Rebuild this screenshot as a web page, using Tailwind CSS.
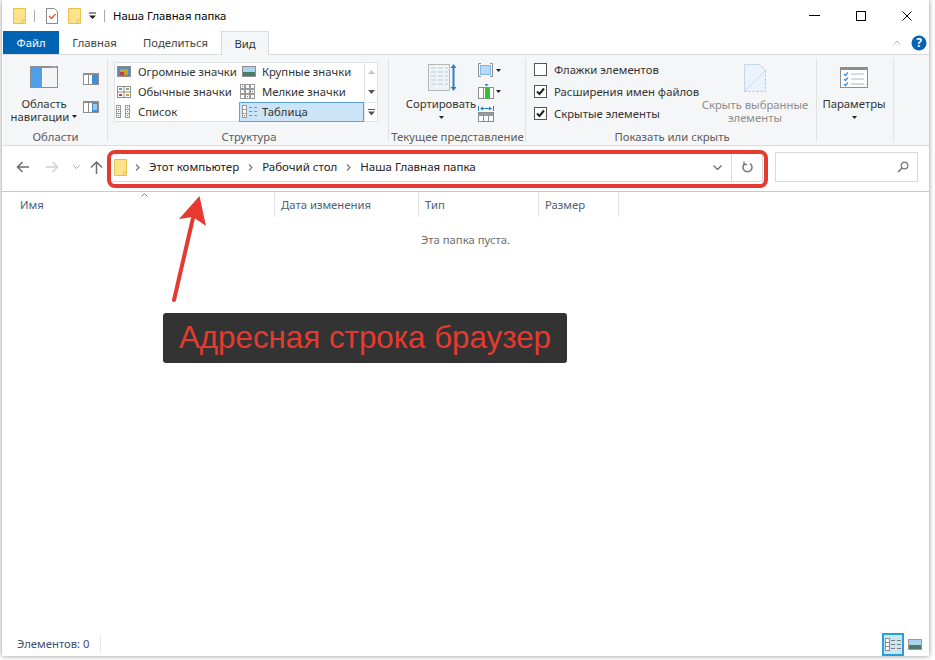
<!DOCTYPE html>
<html lang="ru">
<head>
  <meta charset="UTF-8">
  <title>Наша Главная папка</title>
  <script src="https://cdn.jsdelivr.net/npm/@tailwindcss/browser@4"></script>
</head>
<body class="bg-white">
<div class="relative w-[935px] h-[660px] overflow-hidden bg-white font-['Noto_Sans',sans-serif] text-[11.3px] leading-[13px] whitespace-nowrap">

  <!-- window -->
  <div class="ml-[2px] w-[927px] h-[656px] bg-white flex flex-col shadow-[0_0_5px_rgba(0,0,0,0.45)]">

    <!-- title bar -->
    <div class="h-[31px] flex items-start">
      <div class="flex items-center h-[31px] pl-[11px]">
        <svg width="13" height="16" viewBox="0 0 13 16"><path d="M.5.5h12v15H.5z" fill="#fde28c" stroke="#e6c24c"/><path d="M9.5 15v-3h3" fill="none" stroke="#e6c24c"/></svg>
        <div class="ml-[8px] w-px h-[12px] bg-[#a8a8a8]"></div>
        <svg class="ml-[11px]" width="12" height="16" viewBox="0 0 12 16"><path d="M.5.5h8l3 3v12H.5z" fill="#fff" stroke="#8c8c8c"/><path d="M3 8l2.5 2.5L9.5 6" fill="none" stroke="#e2582b" stroke-width="1.4"/></svg>
        <svg class="ml-[10px]" width="13" height="16" viewBox="0 0 13 16"><path d="M.5.5h12v15H.5z" fill="#fde28c" stroke="#e6c24c"/><path d="M9.5 15v-3h3" fill="none" stroke="#e6c24c"/></svg>
        <svg class="ml-[7px]" width="9" height="8" viewBox="0 0 9 8"><path d="M1 1h7" stroke="#222" stroke-width="1"/><path d="M1 3.5h7L4.5 7z" fill="#222"/></svg>
        <div class="ml-[7px] w-px h-[12px] bg-[#a8a8a8]"></div>
        <span class="ml-[8px] text-black">Наша Главная папка</span>
      </div>
      <div class="ml-auto flex items-center h-[31px] pr-[17px] gap-[36px]">
        <div class="w-[11px] h-px bg-black"></div>
        <div class="w-[10px] h-[10px] border border-black"></div>
        <svg width="10" height="10" viewBox="0 0 10 10"><path d="M.5.5l9 9M9.5.5l-9 9" stroke="#000" stroke-width="1"/></svg>
      </div>
    </div>

    <!-- tabs -->
    <div class="h-[23px] flex items-stretch text-[#444]">
      <div class="ml-px w-[56px] bg-[#0063b1] text-white flex items-center justify-center">Файл</div>
      <div class="w-[71px] flex items-center justify-center">Главная</div>
      <div class="w-[91px] flex items-center justify-center">Поделиться</div>
      <div class="w-[48px] h-[24px] bg-[#f5f6f7] border border-b-0 border-[#dadbdc] flex items-center justify-center relative z-10 text-[#333]">Вид</div>
      <div class="ml-auto flex items-center pr-[2px] gap-[10px]">
        <svg width="8" height="5" viewBox="0 0 8 5"><path d="M.5 4.5L4 1l3.5 3.5" fill="none" stroke="#b9b9b9"/></svg>
        <svg width="16" height="16" viewBox="0 0 16 16"><circle cx="8" cy="8" r="7.5" fill="#0a62b5"/><text x="8" y="12" font-size="12" font-weight="700" fill="#fff" text-anchor="middle" font-family="Noto Sans">?</text></svg>
      </div>
    </div>

    <!-- ribbon -->
    <div class="h-[92px] bg-[#f5f6f7] border-y border-[#dadbdc] flex ml-px text-[#333]">

      <!-- Области -->
      <div class="w-[105px] h-[90px] flex flex-col relative after:absolute after:right-0 after:top-[3px] after:w-px after:h-[84px] after:bg-[#e1e2e3]">
        <div class="h-[74px] flex pl-[6px]">
          <div class="w-[70px] flex flex-col items-center pt-[11px]">
            <svg width="28" height="22" viewBox="0 0 28 22"><rect width="28" height="22" fill="#8d8d8d"/><path d="M21 1h1M23 1h1M25 1h1" stroke="#d8d8d8"/><rect x="1" y="2" width="26" height="19" fill="#fff"/><rect x="1" y="2" width="11" height="19" fill="#4f9fe8"/><rect x="13" y="2" width="14" height="19" fill="#f3f4f5"/></svg>
            <div class="mt-[9px]">Область</div>
            <div class="flex items-center gap-[3px]">навигации <svg width="5" height="3" viewBox="0 0 5 3"><path d="M0 0h5L2.500 3z" fill="#222"/></svg></div>
          </div>
          <div class="ml-[4px] flex flex-col pt-[18px] gap-[16px]">
            <svg width="16" height="12" viewBox="0 0 16 12"><rect width="16" height="12" fill="#8d8d8d"/><rect x="1" y="2" width="14" height="9" fill="#fff"/><rect x="9" y="2" width="6" height="9" fill="#3d8fdc"/><rect x="5" y="2" width="1" height="9" fill="#8d8d8d"/></svg>
            <svg width="16" height="12" viewBox="0 0 16 12"><rect width="16" height="12" fill="#8d8d8d"/><rect x="1" y="2" width="14" height="9" fill="#fff"/><rect x="9" y="2" width="6" height="9" fill="#3d8fdc"/><path d="M10 4h4M10 6h4M10 8h4" stroke="#fff"/><rect x="5" y="2" width="1" height="9" fill="#8d8d8d"/></svg>
          </div>
        </div>
        <div class="text-center text-[#5c5c5c] leading-[16px]">Области</div>
      </div>

      <!-- Структура -->
      <div class="ml-px w-[280px] h-[90px] flex flex-col relative after:absolute after:right-0 after:top-[3px] after:w-px after:h-[84px] after:bg-[#e1e2e3]">
        <div class="h-[74px] pl-[5px] pt-[7px]">
          <div class="w-[264px] h-[60px] flex bg-white shadow-[inset_0_0_0_1px_#dfe1e3]">
            <div class="grid grid-cols-[125px_125px] grid-rows-[20px_20px_20px] text-[#333]">
              <div class="flex items-center pl-[3px] pb-px"><div class="w-[21px]">
                <svg width="14" height="11" viewBox="0 0 14 11"><rect width="14" height="11" fill="#8d8d8d"/><rect x="1" y="1" width="12" height="9" fill="#4e8fcf"/><rect x="3" y="3" width="8" height="6" fill="#c9a22f"/><rect x="3" y="6" width="4" height="3" fill="#c8402f"/></svg>
              </div>Огромные значки</div>
              <div class="flex items-center pl-[3px] pb-px"><div class="w-[20px]">
                <svg width="14" height="11" viewBox="0 0 14 11"><rect width="14" height="11" fill="#8d8d8d"/><rect x="1" y="1" width="12" height="9" fill="#a9d3ee"/><rect x="1" y="6" width="12" height="4" fill="#4c7a6a"/></svg>
              </div>Крупные значки</div>
              <div class="flex items-center pl-[3px] pb-px"><div class="w-[21px]">
                <svg width="14" height="12" viewBox="0 0 14 12"><rect x=".5" y=".5" width="13" height="11" fill="#fff" stroke="#8d8d8d"/><path d="M.5 6h13M7 .5v11" stroke="#8d8d8d"/><rect x="2" y="2" width="3" height="2" fill="#5a9fd8"/><rect x="9" y="2" width="3" height="2" fill="#7fb36a"/><rect x="2" y="8" width="3" height="2" fill="#c8402f"/><rect x="9" y="8" width="3" height="2" fill="#d2a52f"/></svg>
              </div>Обычные значки</div>
              <div class="flex items-center pl-[1px] pb-px"><div class="w-[22px]">
                <svg class="block" width="16" height="15" viewBox="0 0 16 15"><g fill="#fff" stroke="#9a9a9a"><rect x=".5" y=".5" width="4" height="4"/><rect x="5.500" y=".5" width="4" height="4"/><rect x="10.500" y=".5" width="4" height="4"/><rect x=".5" y="5.500" width="4" height="4"/><rect x="5.500" y="5.500" width="4" height="4"/><rect x="10.500" y="5.500" width="4" height="4"/><rect x=".5" y="10.500" width="4" height="4"/><rect x="5.500" y="10.500" width="4" height="4"/><rect x="10.500" y="10.500" width="4" height="4"/></g><rect x="2" y="2" width="1" height="1" fill="#3d8fdc"/><rect x="12" y="7" width="1" height="1" fill="#c8402f"/><rect x="7" y="12" width="1" height="1" fill="#4c9a4c"/></svg>
              </div>Мелкие значки</div>
              <div class="flex items-center pl-[2px] pb-px"><div class="w-[22px]">
                <svg class="block" width="15" height="13" viewBox="0 0 15 13"><g fill="#fff" stroke="#9a9a9a"><rect x=".5" y=".5" width="4" height="12"/><rect x="9.500" y=".5" width="4" height="12"/></g><path d="M.5 4.500h4M.5 8.500h4M9.500 4.500h4M9.500 8.500h4" stroke="#9a9a9a"/><path d="M2 2h1v1H2zM2 6h1v1H2zM11 2h1v1h-1zM11 6h1v1h-1z" fill="#777"/><path d="M2 10h1v1H2zM11 10h1v1h-1z" fill="#c8402f"/></svg>
              </div>Список</div>
              <div class="flex items-center pl-[2px] pb-px bg-[#cce4f7] border border-[#5aa3e0]"><div class="w-[20px]">
                <svg class="block" width="16" height="13" viewBox="0 0 16 13"><rect x=".5" y=".5" width="4" height="12" fill="#fff" stroke="#9a9a9a"/><path d="M.5 4.500h4M.5 8.500h4" stroke="#9a9a9a"/><path d="M7 2.500h3M12 2.500h3M7 6.500h3M12 6.500h3M7 10.500h3M12 10.500h3" stroke="#8d8d8d"/><rect x="2" y="10" width="1" height="1" fill="#c8402f"/></svg>
              </div>Таблица</div>
            </div>
            <div class="w-[14px] border-l border-[#e4e5e6] flex flex-col">
              <div class="h-[20px] flex items-center justify-center"><svg width="7" height="4" viewBox="0 0 7 4"><path d="M0 4h7L3.500 0z" fill="#c4c4c4"/></svg></div>
              <div class="h-[20px] flex items-center justify-center"><svg width="7" height="4" viewBox="0 0 7 4"><path d="M0 0h7L3.500 4z" fill="#555"/></svg></div>
              <div class="h-[20px] flex items-center justify-center border-t border-[#e4e5e6]"><svg width="7" height="7" viewBox="0 0 7 7"><path d="M0 .5h7" stroke="#555"/><path d="M0 2.500h7L3.500 6.500z" fill="#555"/></svg></div>
            </div>
          </div>
        </div>
        <div class="text-center text-[#5c5c5c] leading-[16px]">Структура</div>
      </div>

      <!-- Текущее представление -->
      <div class="w-[137px] h-[90px] flex flex-col relative after:absolute after:right-0 after:top-[3px] after:w-px after:h-[84px] after:bg-[#e1e2e3]">
        <div class="h-[74px] flex pl-[12px]">
          <div class="w-[80px] flex flex-col items-center">
            <svg class="mt-[9px] ml-[2px] shrink-0" width="28" height="27" viewBox="0 0 28 27"><rect x=".5" y=".5" width="21" height="26" fill="#eef3f6" stroke="#b5b5b5"/><g stroke="#b9cbd8"><path d="M3 4h5M10 4h5M17 4h3M3 8h5M10 8h5M17 8h3M3 12h5M10 12h5M17 12h3M3 16h5M10 16h5M17 16h3M3 20h5M10 20h5M17 20h3"/></g><path d="M25.500 2v23" stroke="#2f7fc9" stroke-width="2"/><path d="M22.500 4l3-4 3 4zM22.500 23l3 4 3-4z" fill="#2f7fc9"/></svg>
            <div class="mt-[6px]">Сортировать</div>
            <svg class="mt-[6px]" width="5" height="3" viewBox="0 0 5 3"><path d="M0 0h5L2.500 3z" fill="#222"/></svg>
          </div>
          <div class="-ml-[3px] flex flex-col pt-[8px] gap-[7px]">
            <div class="flex items-center gap-[3px] h-[14px]">
              <svg width="15" height="14" viewBox="0 0 15 14"><path d="M3 .5H.5v13H3M12 .5h2.500v13H12" fill="none" stroke="#8d8d8d"/><rect x="2.500" y="2.500" width="10" height="9" fill="#b7d9f5" stroke="#7fb6e4"/></svg>
              <svg width="5" height="3" viewBox="0 0 5 3"><path d="M0 0h5L2.500 3z" fill="#222"/></svg>
            </div>
            <div class="flex items-center gap-[2px] h-[15px]">
              <svg width="16" height="15" viewBox="0 0 16 15"><path d="M6.500 0h4L8.500 2.500z" fill="#2f7fc9"/><rect x=".5" y="3.500" width="15" height="11" fill="#fff" stroke="#8d8d8d"/><path d="M5.500 3.500v11" stroke="#8d8d8d"/><rect x="7" y="3.500" width="4" height="11" fill="#2dc12d"/><path d="M11.500 3.500v11" stroke="#8d8d8d"/></svg>
              <svg width="5" height="3" viewBox="0 0 5 3"><path d="M0 0h5L2.500 3z" fill="#222"/></svg>
            </div>
            <svg width="16" height="16" viewBox="0 0 16 16"><path d="M.5 0v5M15.500 0v5" stroke="#2f7fc9"/><path d="M3 2.500h10" stroke="#2f7fc9"/><path d="M5 .5L2 2.500l3 2zM11 .5l3 2-3 2z" fill="#2f7fc9"/><rect x=".5" y="6.500" width="15" height="9" fill="#fff" stroke="#8d8d8d"/><rect x="1" y="7" width="14" height="3" fill="#9a9a9a"/><path d="M5.500 10v5M10.500 10v5" stroke="#8d8d8d"/></svg>
          </div>
        </div>
        <div class="text-center text-[#5c5c5c] leading-[16px]">Текущее представление</div>
      </div>

      <!-- Показать или скрыть -->
      <div class="ml-px w-[290px] h-[90px] flex flex-col relative after:absolute after:right-0 after:top-[3px] after:w-px after:h-[84px] after:bg-[#e1e2e3]">
        <div class="h-[74px] flex">
          <div class="w-[176px] pl-[7px] pt-[8px] flex flex-col gap-[9px]">
            <div class="flex items-center h-[13px]">
              <div class="w-[13px] h-[13px] shrink-0 border border-[#555] bg-white"></div>
              <span class="ml-[7px]">Флажки элементов</span>
            </div>
            <div class="flex items-center h-[13px]">
              <div class="w-[13px] h-[13px] shrink-0 border border-[#555] bg-white flex items-center justify-center"><svg width="9" height="9" viewBox="0 0 9 9"><path d="M1 4.500l2.500 2.500L8 1.500" fill="none" stroke="#222" stroke-width="2"/></svg></div>
              <span class="ml-[7px]">Расширения имен файлов</span>
            </div>
            <div class="flex items-center h-[13px]">
              <div class="w-[13px] h-[13px] shrink-0 border border-[#555] bg-white flex items-center justify-center"><svg width="9" height="9" viewBox="0 0 9 9"><path d="M1 4.500l2.500 2.500L8 1.500" fill="none" stroke="#222" stroke-width="2"/></svg></div>
              <span class="ml-[7px]">Скрытые элементы</span>
            </div>
          </div>
          <div class="w-[104px] flex flex-col items-center text-[#8d8d8d] pt-[9px]">
            <svg class="shrink-0" width="22" height="28" viewBox="0 0 22 28"><path d="M.5.5h15l6 6v21H.5z" fill="#eaf2fb"/><path d="M.5 27.500V.5h15l6 6" fill="none" stroke="#c3d6ea"/><path d="M21.500 6.500v21H.5" fill="none" stroke="#a9c0d8" stroke-dasharray="2 2"/><path d="M1 27L21 7" stroke="#c3d6ea"/></svg>
            <div class="mt-[6px]">Скрыть выбранные</div>
            <div>элементы</div>
          </div>
        </div>
        <div class="text-center text-[#5c5c5c] leading-[16px]">Показать или скрыть</div>
      </div>

      <!-- Параметры -->
      <div class="w-[77px] h-[90px] relative after:absolute after:right-0 after:top-[3px] after:w-px after:h-[84px] after:bg-[#e1e2e3]">
        <div class="flex flex-col items-center pr-[3px] pt-[12px]">
          <svg width="28" height="21" viewBox="0 0 28 21"><rect x=".5" y=".5" width="27" height="20" fill="#fff" stroke="#8d8d8d"/><rect x="1" y="1" width="26" height="2" fill="#8d8d8d"/><path d="M4 7l1.500 1.500L8 5.500M4 12l1.500 1.500L8 10.500M4 17l1.500 1.500L8 15.500" fill="none" stroke="#3d8fdc" stroke-width="1.300"/><path d="M11 7h13M11 12h13M11 17h13" stroke="#b5b5b5"/></svg>
          <div class="mt-[9px]">Параметры</div>
          <svg class="mt-[6px]" width="5" height="3" viewBox="0 0 5 3"><path d="M0 0h5L2.500 3z" fill="#222"/></svg>
        </div>
      </div>
    </div>

    <!-- navigation row -->
    <div class="h-[46px] flex items-start pt-[6px] border-b border-[#c9c9c9]">
      <div class="h-[30px] flex items-center pl-[14px]">
        <svg width="13" height="12" viewBox="0 0 13 12"><path d="M13 6H1.500M6.500 1L1.500 6l5 5" fill="none" stroke="#6d6d6d" stroke-width="1.500"/></svg>
        <svg class="ml-[17px]" width="13" height="12" viewBox="0 0 13 12"><path d="M0 6h11.500M6.500 1l5 5-5 5" fill="none" stroke="#d0d0d0" stroke-width="1.500"/></svg>
        <svg class="ml-[14px]" width="7" height="4" viewBox="0 0 7 4"><path d="M.5.5L3.500 3.500 6.500.5" fill="none" stroke="#a8a8a8"/></svg>
        <svg class="ml-[10px]" width="13" height="13" viewBox="0 0 13 13"><path d="M6.500 13V1.500M1 6.500l5.500-5.500 5.500 5.500" fill="none" stroke="#6d6d6d" stroke-width="1.500"/></svg>
      </div>
      <div class="ml-[7px] w-[653px] h-[30px] border border-[#d9d9d9] flex items-center text-[#222] text-[11.5px] bg-white">
        <svg class="ml-[3px]" width="13" height="17" viewBox="0 0 13 17"><path d="M.5.5h12v16H.5z" fill="#fde28c" stroke="#e6c24c"/><path d="M9.500 16v-3h3" fill="none" stroke="#e6c24c"/></svg>
        <svg class="ml-[8px]" width="5" height="7" viewBox="0 0 5 7"><path d="M1 .5l3 3-3 3" fill="none" stroke="#777" stroke-width="1.200"/></svg>
        <span class="ml-[9px] pb-[2px]">Этот компьютер</span>
        <svg class="ml-[9px]" width="5" height="7" viewBox="0 0 5 7"><path d="M1 .5l3 3-3 3" fill="none" stroke="#777" stroke-width="1.200"/></svg>
        <span class="ml-[9px] pb-[2px]">Рабочий стол</span>
        <svg class="ml-[9px]" width="5" height="7" viewBox="0 0 5 7"><path d="M1 .5l3 3-3 3" fill="none" stroke="#777" stroke-width="1.200"/></svg>
        <span class="ml-[9px] pb-[2px]">Наша Главная папка</span>
        <svg class="ml-auto mr-[9px]" width="9" height="5" viewBox="0 0 9 5"><path d="M.5.5l4 4 4-4" fill="none" stroke="#6d6d6d" stroke-width="1.300"/></svg>
        <div class="w-[31px] h-full border-l border-[#d9d9d9] flex items-center justify-center">
          <svg width="11" height="12" viewBox="0 0 11 12"><path d="M3 2.500A4.500 4.500 0 1 0 8 2.500" fill="none" stroke="#777" stroke-width="1.500"/><path d="M2 .5v3h3" fill="none" stroke="#777" stroke-width="1.300"/></svg>
        </div>
      </div>
      <div class="ml-[12px] w-[143px] h-[30px] border border-[#d9d9d9] flex items-center justify-end pr-[8px]">
        <svg width="12" height="12" viewBox="0 0 12 12"><circle cx="7.500" cy="4.500" r="3.300" fill="none" stroke="#777" stroke-width="1.300"/><path d="M5 7L1 11" stroke="#777" stroke-width="1.600"/></svg>
      </div>
    </div>

    <!-- column headers -->
    <div class="relative h-[25px] flex text-[#4c607a]">
      <div class="w-[273px] pl-[18px] border-r border-[#e5e5e5] flex items-center">Имя</div>
      <div class="w-[144px] pl-[6px] border-r border-[#e5e5e5] flex items-center">Дата изменения</div>
      <div class="w-[120px] pl-[6px] border-r border-[#e5e5e5] flex items-center">Тип</div>
      <div class="w-[80px] pl-[6px] border-r border-[#e5e5e5] flex items-center">Размер</div>
      <svg class="absolute left-[139px] top-[1px]" width="7" height="4" viewBox="0 0 7 4"><path d="M.5 3.500L3.500.5l3 3" fill="none" stroke="#888"/></svg>
    </div>

    <!-- file list -->
    <div class="flex-1 text-center pt-[16px] text-[#6d6d6d]">Эта папка пуста.</div>

    <!-- status bar -->
    <div class="h-[24px] flex items-center">
      <span class="pl-[15px] pb-[2px] text-[#3c4f6c]">Элементов: 0</span>
      <div class="ml-[10px] w-px h-[16px] bg-[#e8e8e8]"></div>
      <div class="ml-auto flex items-center gap-[4px] pr-[7px]">
        <div class="w-[22px] h-[23px] border-2 border-[#26a0da] bg-[#c9e6f5] flex items-center justify-center">
          <svg width="16" height="13" viewBox="0 0 16 13"><rect x=".5" y=".5" width="4" height="12" fill="#fff" stroke="#8d8d8d"/><path d="M.5 4.500h4M.5 8.500h4" stroke="#8d8d8d"/><path d="M6 2.500h4M12 2.500h4M6 6.500h4M12 6.500h4M6 10.500h4M12 10.500h4" stroke="#7d7d7d"/></svg>
        </div>
        <svg width="14" height="11" viewBox="0 0 14 11"><rect width="14" height="11" fill="#9a9a9a"/><rect x="1" y="1" width="12" height="9" fill="#a9d3ee"/><rect x="1" y="6" width="12" height="4" fill="#4c7a6a"/></svg>
      </div>
    </div>
  </div>

  <!-- annotation -->
  <div class="absolute left-[107px] top-[150px] w-[661px] h-[38px] border-4 border-[#e53a2f] rounded-[8px]"></div>
  <svg class="absolute left-[165px] top-[190px]" width="50" height="116" viewBox="165 190 50 116">
    <path d="M174 300L193 218" stroke="#e53a2f" stroke-width="4" stroke-linecap="round"/>
    <path d="M199.500 196L179 219l14-2 13 9z" fill="#e53a2f"/>
  </svg>
  <div class="absolute left-[163px] top-[313px] w-[404px] h-[50px] rounded-[3px] bg-[#333333] text-[#e53a2f] font-['Liberation_Sans',sans-serif] text-[31.3px] leading-[50px] text-center">Адресная строка браузер</div>
</div>
</body>
</html>
